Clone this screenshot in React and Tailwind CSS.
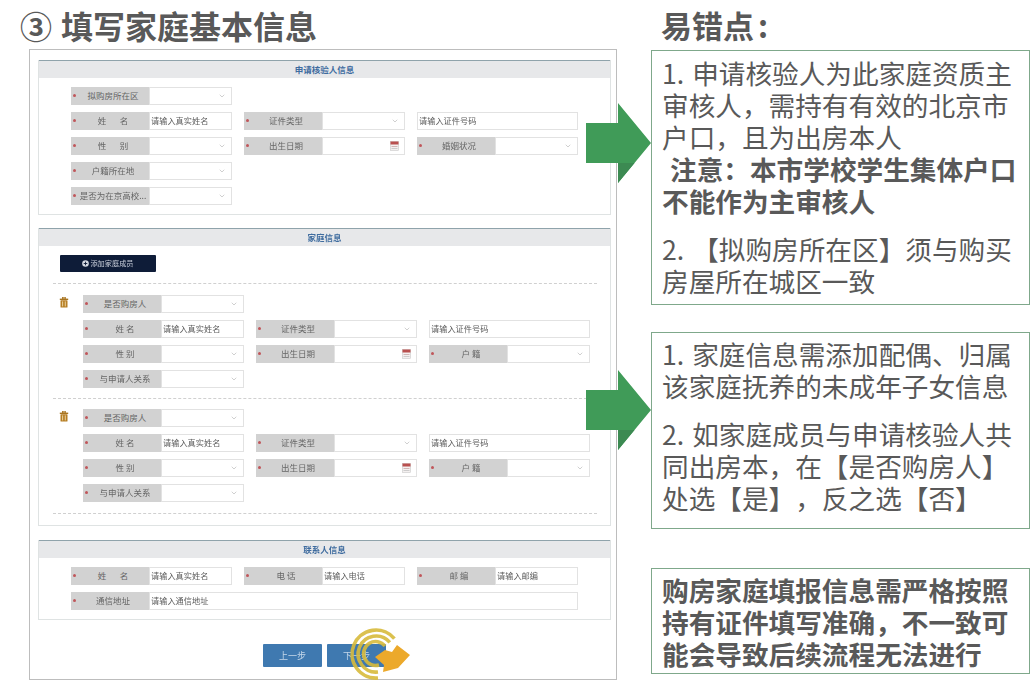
import React from "react";
import { ChevronDown } from "lucide-react";

const FONT = '"Noto Sans CJK SC", "Noto Sans", sans-serif';

function Calendar() {
  return (
    <svg width="9" height="10" viewBox="0 0 9 10" className="shrink-0">
      <rect x="0.5" y="0.5" width="8" height="9" fill="#f4f0f0" stroke="#c9c9c9" strokeWidth="0.6" />
      <rect x="0.5" y="0.5" width="8" height="3" fill="#b9504f" />
      <rect x="1.5" y="5" width="6" height="0.8" fill="#c9a7a7" />
      <rect x="1.5" y="7" width="6" height="0.8" fill="#c4c4c4" />
    </svg>
  );
}

function Control({ type, placeholder }) {
  return (
    <div className="flex-1 min-w-0 h-full flex items-center justify-between border border-[#e2e2e2] bg-white pl-[1px] pr-[5px] pb-[1px] text-[8.2px] text-[#5c5c5c] whitespace-nowrap overflow-hidden">
      <span>{type === "input" ? placeholder : ""}</span>
      {type === "select" && <ChevronDown size={8} strokeWidth={1.5} color="#a0a0a0" />}
      {type === "date" && <Calendar />}
    </div>
  );
}

function Field({ label, type = "select", placeholder = "请输入真实姓名", wide = false }) {
  return (
    <div className={`flex h-[18px] ${wide ? "w-[507px]" : "w-[161px]"}`}>
      <div className="relative w-[78px] shrink-0 h-full bg-[#d2d2d2] flex items-center justify-center pl-[6px] pb-[1px] text-[8.5px] text-[#666] whitespace-pre">
        <span className="absolute left-[2px] top-[7px] w-[3px] h-[3px] rounded-full bg-[#c0565a]" />
        {label}
      </div>
      <Control type={type} placeholder={placeholder} />
    </div>
  );
}

function Bare({ placeholder }) {
  return (
    <div className="flex h-[18px] w-[161px]">
      <Control type="input" placeholder={placeholder} />
    </div>
  );
}

function Row({ children }) {
  return <div className="flex gap-3">{children}</div>;
}

function Panel({ title, className, children }) {
  return (
    <section className={`border border-[#dfe3e3] border-t-0 ${className}`}>
      <h2 className="h-[18px] border-t border-t-[#8fa3ab] bg-[#e7e8ea] flex items-center justify-center pb-[1px] text-[8.5px] font-bold text-[#3f6c9f]">
        {title}
      </h2>
      {children}
    </section>
  );
}

function Trash() {
  return (
    <svg width="10" height="11" viewBox="0 0 10 11" className="shrink-0">
      <rect x="3.5" y="0.3" width="3" height="1.5" fill="none" stroke="#a8741e" strokeWidth="0.8" />
      <rect x="0.8" y="1.6" width="8.4" height="1.4" fill="#a8741e" />
      <rect x="1.5" y="3.2" width="7" height="7.4" rx="0.6" fill="#b67e24" />
      <rect x="3.2" y="4.4" width="0.9" height="5" fill="#f1dcae" />
      <rect x="5.8" y="4.4" width="0.9" height="5" fill="#f1dcae" />
    </svg>
  );
}

function PlusCircle() {
  return (
    <svg width="7" height="7" viewBox="0 0 7 7" className="shrink-0">
      <circle cx="3.5" cy="3.5" r="3.3" fill="#d5d9e2" />
      <path d="M3.5 1.7V5.3M1.7 3.5H5.3" stroke="#0e1c38" strokeWidth="0.9" />
    </svg>
  );
}

function Dash({ className = "" }) {
  return <div className={`ml-[14px] w-[544px] border-t border-dashed border-[#d0d0d0] ${className}`} />;
}

function Member() {
  return (
    <div className="flex pl-[20px]">
      <div className="w-[24px] pt-[2px]">
        <Trash />
      </div>
      <div className="flex flex-col gap-[7px]">
        <Row>
          <Field label="是否购房人" />
        </Row>
        <Row>
          <Field label="姓 名" type="input" />
          <Field label="证件类型" />
          <Bare placeholder="请输入证件号码" />
        </Row>
        <Row>
          <Field label="性 别" />
          <Field label="出生日期" type="date" />
          <Field label="户 籍" />
        </Row>
        <Row>
          <Field label="与申请人关系" />
        </Row>
      </div>
    </div>
  );
}

function Arrow({ className }) {
  return (
    <svg width="66" height="80" viewBox="0 0 66 80" className={`absolute left-[586px] ${className}`}>
      <polygon points="0,20 32,20 32,0 65,40 32,80 32,60 0,60" fill="#409b58" />
      <polygon points="32,60 32,80 48.5,60" fill="#3c8a52" />
    </svg>
  );
}

function Cursor() {
  return (
    <svg width="70" height="60" viewBox="0 0 70 60" className="absolute left-[345px] top-[625px] blur-[0.4px]">
      <g fill="none" stroke="#d8bb3c" strokeWidth="3.6" opacity="0.9">
        <path d="M49.4 13.6 A24 24 0 1 0 33 53" />
        <path d="M44.8 17.4 A18 18 0 1 0 33 47" />
        <path d="M40 21 A12 12 0 1 0 34 40" />
      </g>
      <polygon points="52,20 65,30 53,43 38,47 39,40 30,32 40,25 47,27" fill="#eca92b" />
    </svg>
  );
}

function Note({ className, children }) {
  return (
    <div className={`w-[379px] border border-[#7fa88b] pl-[10px] pr-[2px] text-[26.65px] leading-[32px] text-[#595959] whitespace-nowrap [word-spacing:2px] [text-spacing-trim:space-all] ${className}`}>
      {children}
    </div>
  );
}

export default function App() {
  return (
    <div className="relative w-[1034px] h-[692px] overflow-hidden bg-white flex" style={{ fontFamily: FONT }}>
      <div className="w-[651px] shrink-0 flex flex-col">
        <h1 className="h-[49px] pl-[20px] flex items-center gap-[9px] text-[32px] font-bold text-[#595959] whitespace-nowrap">
          <span>③</span>
          <span>填写家庭基本信息</span>
        </h1>
        <main className="ml-[29px] w-[588px] h-[631px] border border-[#bdbdbd] pt-[10px] pl-[8px] blur-[0.4px]">
          <Panel title="申请核验人信息" className="w-[573px] h-[155px]">
            <div className="pt-[9px] pl-[32px] flex flex-col gap-[7px]">
              <Row>
                <Field label="拟购房所在区" />
              </Row>
              <Row>
                <Field label="姓       名" type="input" />
                <Field label="证件类型" />
                <Bare placeholder="请输入证件号码" />
              </Row>
              <Row>
                <Field label="性       别" />
                <Field label="出生日期" type="date" />
                <Field label="婚姻状况" />
              </Row>
              <Row>
                <Field label="户籍所在地" />
              </Row>
              <Row>
                <Field label="是否为在京高校..." />
              </Row>
            </div>
          </Panel>
          <Panel title="家庭信息" className="w-[573px] h-[298px] mt-[13px]">
            <div className="pt-[9px]">
              <button className="ml-[21px] w-[96px] h-[17px] bg-[#0e1c38] rounded-[1px] flex items-center justify-center gap-[1px] text-[7.2px] text-[#c9cfdb]">
                <PlusCircle />
                添加家庭成员
              </button>
              <Dash className="mt-[11px] mb-[11px]" />
              <Member />
              <Dash className="mt-[10px] mb-[10px]" />
              <Member />
              <Dash className="mt-[11px]" />
            </div>
          </Panel>
          <Panel title="联系人信息" className="w-[573px] h-[80px] mt-[14px]">
            <div className="pt-[9px] pl-[32px] flex flex-col gap-[7px]">
              <Row>
                <Field label="姓       名" type="input" />
                <Field label="电 话" type="input" placeholder="请输入电话" />
                <Field label="邮 编" type="input" placeholder="请输入邮编" />
              </Row>
              <Row>
                <Field label="通信地址" type="input" placeholder="请输入通信地址" wide />
              </Row>
            </div>
          </Panel>
          <div className="mt-[24px] pl-[225px] flex gap-[5px]">
            <button className="w-[59px] h-[23px] bg-[#3f79b0] rounded-[1px] text-[9px] text-[#c5d8ea]">上一步</button>
            <button className="w-[59px] h-[23px] bg-[#3f79b0] rounded-[1px] text-[9px] text-[#c5d8ea]">下一步</button>
          </div>
        </main>
      </div>
      <aside className="flex flex-col">
        <h2 className="h-[50px] pl-[10px] flex items-center text-[31px] font-bold text-[#595959] whitespace-nowrap">
          易错点<span className="ml-[4px]">:</span>
        </h2>
        <Note className="h-[255px] pt-[6px]">
          <p>1. 申请核验人为此家庭资质主</p>
          <p>审核人，需持有有效的北京市</p>
          <p>户口，且为出房本人</p>
          <p className="font-bold whitespace-pre"> 注意：本市学校学生集体户口</p>
          <p className="font-bold">不能作为主审核人</p>
          <p className="mt-[16px]">2. 【拟购房所在区】须与购买</p>
          <p>房屋所在城区一致</p>
        </Note>
        <Note className="h-[197px] mt-[27px] pt-[5px]">
          <p>1. 家庭信息需添加配偶、归属</p>
          <p>该家庭抚养的未成年子女信息</p>
          <p className="mt-[16px]">2. 如家庭成员与申请核验人共</p>
          <p>同出房本，在【是否购房人】</p>
          <p>处选【是】，反之选【否】</p>
        </Note>
        <Note className="h-[106px] mt-[39px] pt-[5px] font-bold">
          <p>购房家庭填报信息需严格按照</p>
          <p>持有证件填写准确，不一致可</p>
          <p>能会导致后续流程无法进行</p>
        </Note>
      </aside>
      <Arrow className="top-[103px]" />
      <Arrow className="top-[370px]" />
      <Cursor />
    </div>
  );
}
